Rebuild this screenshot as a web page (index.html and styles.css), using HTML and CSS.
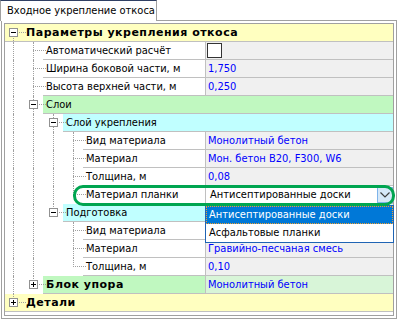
FILE: index.html
```html
<!DOCTYPE html>
<html lang="ru">

<head>
    <meta charset="UTF-8">
    <title>Входное укрепление откоса</title>
    <link rel="stylesheet" href="styles.css">
</head>

<body>
    <div class="tabs">
        <div class="tab">Входное укрепление откоса</div>
    </div>

    <div class="panel">
        <div class="grid">
            <div class="row root">
                <span class="g g0 s"><span class="box"></span></span>
                <div class="cell"><span class="name">Параметры укрепления откоса</span></div>
            </div>
            <div class="row">
                <span class="g g0 v"></span><span class="g t"></span>
                <div class="cell">
                    <span class="name">Автоматический расчёт</span>
                    <span class="value"><span class="check"></span></span>
                </div>
            </div>
            <div class="row">
                <span class="g g0 v"></span><span class="g t"></span>
                <div class="cell">
                    <span class="name">Ширина боковой части, м</span>
                    <span class="value">1,750</span>
                </div>
            </div>
            <div class="row">
                <span class="g g0 v"></span><span class="g t"></span>
                <div class="cell">
                    <span class="name">Высота верхней части, м</span>
                    <span class="value">0,250</span>
                </div>
            </div>
            <div class="row">
                <span class="g g0 v"></span><span class="g t"><span class="box"></span></span>
                <div class="cell group green"><span class="name">Слои</span></div>
            </div>
            <div class="row">
                <span class="g g0 v"></span><span class="g v"></span><span class="g t"><span class="box"></span></span>
                <div class="cell group cyan"><span class="name">Слой укрепления</span></div>
            </div>
            <div class="row">
                <span class="g g0 v"></span><span class="g v"></span><span class="g v"></span><span class="g t"></span>
                <div class="cell">
                    <span class="name">Вид материала</span>
                    <span class="value">Монолитный бетон</span>
                </div>
            </div>
            <div class="row">
                <span class="g g0 v"></span><span class="g v"></span><span class="g v"></span><span class="g t"></span>
                <div class="cell">
                    <span class="name">Материал</span>
                    <span class="value">Мон. бетон B20, F300, W6</span>
                </div>
            </div>
            <div class="row">
                <span class="g g0 v"></span><span class="g v"></span><span class="g v"></span><span class="g t"></span>
                <div class="cell">
                    <span class="name">Толщина, м</span>
                    <span class="value">0,08</span>
                </div>
            </div>
            <div class="row">
                <span class="g g0 v"></span><span class="g v"></span><span class="g v"></span><span class="g e"></span>
                <div class="cell">
                    <span class="name">Материал планки</span>
                    <span class="value combo">
                        Антисептированные доски
                        <span class="drop">
                            <svg width="10" height="6" viewBox="0 0 10 6"><path d="M0.5 0.5 L5 5 L9.5 0.5" fill="none" stroke="#3d3d3d" stroke-width="1.2"/></svg>
                        </span>
                    </span>
                </div>
            </div>
            <div class="row">
                <span class="g g0 v"></span><span class="g v"></span><span class="g e"><span class="box"></span></span>
                <div class="cell group cyan"><span class="name">Подготовка</span></div>
            </div>
            <div class="row">
                <span class="g g0 v"></span><span class="g v"></span><span class="g"></span><span class="g t"></span>
                <div class="cell">
                    <span class="name">Вид материала</span>
                    <span class="value"></span>
                </div>
            </div>
            <div class="row">
                <span class="g g0 v"></span><span class="g v"></span><span class="g"></span><span class="g t"></span>
                <div class="cell">
                    <span class="name">Материал</span>
                    <span class="value">Гравийно-песчаная смесь</span>
                </div>
            </div>
            <div class="row">
                <span class="g g0 v"></span><span class="g v"></span><span class="g"></span><span class="g e"></span>
                <div class="cell">
                    <span class="name">Толщина, м</span>
                    <span class="value">0,10</span>
                </div>
            </div>
            <div class="row">
                <span class="g g0 v"></span><span class="g e"><span class="box plus"></span></span>
                <div class="cell block">
                    <span class="name">Блок упора</span>
                    <span class="value">Монолитный бетон</span>
                </div>
            </div>
            <div class="row root">
                <span class="g g0 e"><span class="box plus"></span></span>
                <div class="cell"><span class="name">Детали</span></div>
            </div>

            <div class="highlight"></div>

            <ul class="dropdown">
                <li class="selected">Антисептированные доски</li>
                <li>Асфальтовые планки</li>
            </ul>
        </div>
    </div>
</body>

</html>
```

FILE: styles.css
```css
* {
    margin: 0;
    padding: 0;
    box-sizing: border-box;
}

body {
    background-color: #fff;
    font-family: "DejaVu Sans Condensed", "Liberation Sans", sans-serif;
    font-size: 11px;
    color: #000;
}

/* tab strip */
.tabs {
    height: 20px;
    position: relative;
    z-index: 2;
}

.tab {
    width: 157px;
    height: 21px;
    padding-left: 6px;
    line-height: 20px;
    background-color: #fff;
    border-top: 1px solid #2f3f63;
    border-left: 1px solid #a0a0a0;
    border-right: 1px solid #a0a0a0;
    white-space: nowrap;
}

.panel {
    margin-left: 1px;
    width: 396px;
    height: 299px;
    border: 1px solid #a0a0a0;
    padding: 2px;
}

.grid {
    position: relative;
    height: 100%;
    border: 1px solid #a0a0a0;
}

/* tree rows */
.row {
    display: flex;
    height: 18px;
}

.g {
    position: relative;
    flex: none;
    width: 20px;
    height: 18px;
}

.g0 {
    width: 18px;
}

.g::before,
.g::after {
    content: "";
    position: absolute;
    display: none;
}

.v::before,
.t::before {
    display: block;
    left: 10px;
    top: 0;
    bottom: 0;
    border-left: 1px dotted #a0a0a0;
}

.e::before {
    display: block;
    left: 10px;
    top: 0;
    height: 9px;
    border-left: 1px dotted #a0a0a0;
}

.s::before {
    display: block;
    left: 10px;
    top: 9px;
    bottom: 0;
    border-left: 1px dotted #a0a0a0;
}

.t::after,
.e::after,
.s::after {
    display: block;
    left: 10px;
    top: 8px;
    width: 13px;
    border-top: 1px dotted #a0a0a0;
}

.g0::before,
.g0::after {
    left: 8px;
}

.box {
    position: absolute;
    z-index: 1;
    left: 6px;
    top: 4px;
    width: 9px;
    height: 9px;
    border: 1px solid #919191;
    background-color: #fff;
}

.g0 .box {
    left: 4px;
}

.box::before {
    content: "";
    position: absolute;
    left: 1px;
    top: 3px;
    width: 5px;
    height: 1px;
    background-color: #000;
}

.box.plus::after {
    content: "";
    position: absolute;
    left: 3px;
    top: 1px;
    width: 1px;
    height: 5px;
    background-color: #000;
}

.cell {
    flex: 1;
    display: flex;
    height: 18px;
    line-height: 17px;
    border-bottom: 1px solid #c0c0c0;
}

.name {
    flex: 1;
    padding-left: 3px;
    background-color: #fff;
    border-right: 1px solid #c0c0c0;
    white-space: nowrap;
    overflow: hidden;
}

.value {
    flex: none;
    width: 187px;
    padding-left: 2px;
    background-color: #f0f0f0;
    color: #0000ff;
    white-space: nowrap;
}

.root {
    background-color: #ffffc0;
}

.root .g0 {
    border-bottom: 1px solid #c0c0c0;
}

.root .name {
    background-color: transparent;
    border-right: none;
}

.root .name,
.block .name {
    font-family: "DejaVu Sans", sans-serif;
    font-weight: bold;
    letter-spacing: 0.5px;
}

.group .name {
    border-right: none;
}

.green .name {
    background-color: #c0f8c0;
}

.cyan .name {
    background-color: #c0ffff;
}

.block .name {
    background-color: #c0f8c0;
}

.block .value {
    background-color: #d8f5d8;
}

.check {
    display: inline-block;
    width: 15px;
    height: 15px;
    margin: 1px 0 0 -1px;
    vertical-align: top;
    border: 1px solid #333;
    background-color: #fff;
}

.combo {
    display: flex;
    padding-left: 4px;
    background-color: #fff;
    color: #000;
}

.drop {
    display: flex;
    align-items: center;
    justify-content: center;
    margin-left: auto;
    width: 16px;
    height: 16px;
    margin-top: 1px;
    background-color: #d6e8f8;
    border: 1px solid #7eb4ea;
}

/* annotation around the edited row */
.highlight {
    position: absolute;
    z-index: 3;
    left: 68px;
    top: 161px;
    width: 322px;
    height: 21px;
    border: 3px solid #00a550;
    border-radius: 10px;
}

.dropdown {
    position: absolute;
    z-index: 2;
    left: 200px;
    top: 181px;
    width: 189px;
    height: 38px;
    list-style: none;
    background-color: #fff;
    border: 1px solid #1f64b4;
}

.dropdown li {
    height: 18px;
    padding-left: 3px;
    line-height: 17px;
    white-space: nowrap;
}

.dropdown .selected {
    background-color: #0078d7;
    color: #fff;
    outline: 1px dotted #f0a030;
    outline-offset: -1px;
}
```
